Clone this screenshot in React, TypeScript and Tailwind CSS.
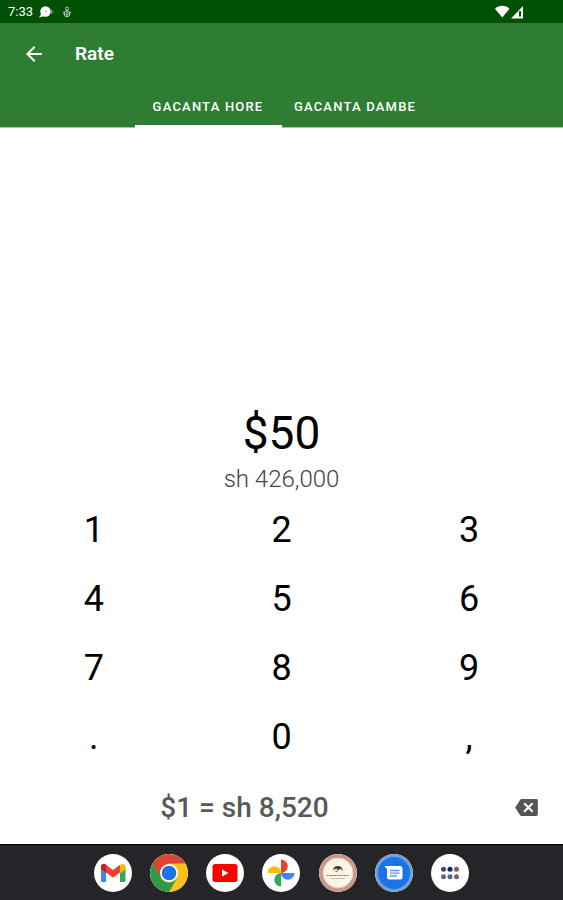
import { useState } from "react";
import type { ReactNode } from "react";

const TABS = ["GACANTA HORE", "GACANTA DAMBE"];
const KEYS = ["1", "2", "3", "4", "5", "6", "7", "8", "9", ".", "0", ","];

function StatusBar() {
  return (
    <div className="flex h-[23px] items-center bg-[#005005] pl-2 pr-10 text-white">
      <span className="text-[13px] leading-4">7:33</span>
      <svg className="ml-1.5 h-4 w-[15px]" viewBox="0 0 15 16" aria-hidden="true">
        <circle cx="6.500" cy="7.500" r="5.200" fill="#fff" />
        <path d="M3 8.500 0 13.500l5.500-1.500z" fill="#fff" />
        <circle cx="6.800" cy="7.500" r="1" fill="#8eb38f" />
        <path d="M12.500 5.500v4.500M14 6.500v2.500" stroke="#6b976c" strokeWidth="1" />
      </svg>
      <svg className="ml-2 h-4 w-2.5" viewBox="0 0 10 16" fill="none" stroke="#b5ceb5" aria-hidden="true">
        <circle cx="5" cy="4.500" r="1.500" />
        <circle cx="5" cy="9.800" r="3" />
        <path d="M1 8l4 3 4-3M5 6v6" />
      </svg>
      <svg className="ml-auto h-4 w-[28px]" viewBox="0 0 28 16" aria-hidden="true">
        <path d="M0 4.700C4 .9 10.500.9 14.500 4.700L7.300 13.400z" fill="#fff" />
        <path d="M28 2v12.500H16z" fill="#fff" />
        <path d="M25 7v5.500" stroke="#005005" strokeWidth="2" />
      </svg>
    </div>
  );
}

function GmailIcon() {
  return (
    <svg viewBox="0 0 38 38" className="size-full">
      <path d="M7 13v13.500q0 1.500 1.500 1.500H12V16z" fill="#4285f4" />
      <path d="M26 16v12h4q1.500 0 1.500-1.500V13z" fill="#34a853" />
      <path d="M26 12.500v7l5.500-4.300V13c0-3-3-4-5.500-2z" fill="#fbbc04" />
      <path d="M7 15.200V13c0-3 3-4 5-2.300l7 5.300 7-5.300v7.800l-7 5.200-7-5.200z" fill="#ea4335" />
      <path d="M7 12.500v2.700l5 3.500v-8C9.500 9 7 10.300 7 12.500z" fill="#c5221f" />
    </svg>
  );
}

function ChromeIcon() {
  return (
    <svg viewBox="0 0 38 38" className="size-full">
      <circle cx="19" cy="19" r="19" fill="#fbc116" />
      <path d="M2.550 9.500A19 19 0 0 1 35.450 9.500H19L10.800 23.800z" fill="#db4437" />
      <path d="M2.550 9.500A19 19 0 0 0 19 38l8.200-14.250A9.500 9.500 0 0 1 10.800 23.750z" fill="#2b9b49" />
      <circle cx="19" cy="19" r="9" fill="#fff" />
      <circle cx="19" cy="19" r="7.300" fill="#1a73e8" />
    </svg>
  );
}

function YoutubeIcon() {
  return (
    <svg viewBox="0 0 38 38" className="size-full">
      <rect x="6.500" y="10" width="25" height="18" rx="2.500" fill="#f00" />
      <path d="M16 15.500v7l6.500-3.500z" fill="#fff" />
    </svg>
  );
}

function PhotosIcon() {
  return (
    <svg viewBox="0 0 38 38" className="size-full">
      <path d="M19 5.500a6.700 6.700 0 0 1 0 13.500z" fill="#ea4335" />
      <path d="M32.500 19a6.700 6.700 0 0 1-13.500 0z" fill="#4285f4" />
      <path d="M19 32.500a6.700 6.700 0 0 1 0-13.500z" fill="#34a853" />
      <path d="M5.500 19a6.700 6.700 0 0 1 13.500 0z" fill="#fbbc04" />
    </svg>
  );
}

function BadgeIcon() {
  return (
    <svg viewBox="0 0 38 38" className="size-full">
      <circle cx="19" cy="19" r="19" fill="#c9988b" />
      <circle cx="19" cy="19" r="15" fill="#fbf5e6" stroke="#e8cfc2" />
      <path d="M14 16q1-4.500 5.500-4 4 .5 4.500 5l-2.500-2.500-2 2-2-2z" fill="#4a3832" />
      <path d="m15.500 17 2-1.500 1.500 2-1 1z" fill="#c98d80" />
      <path d="M7.500 21.500h23" stroke="#8d8077" strokeWidth="1.200" strokeDasharray="2 .5" />
      <path d="M12 24.500h14" stroke="#e0b5a8" />
    </svg>
  );
}

function MessagesIcon() {
  return (
    <svg viewBox="0 0 38 38" className="size-full">
      <circle cx="19" cy="19" r="19" fill="#6f9fd8" />
      <circle cx="19" cy="19" r="16" fill="#1a73e8" />
      <path d="M9.500 12h15.500q2.500 0 2.500 2.500V23q0 2.500-2.500 2.500H14.500Q12 25.500 12 23v-8z" fill="#fff" />
      <path d="M15 16.500h9.500M15 19.200h9.500M15 22h7" stroke="#5d95e8" strokeWidth="1.300" />
    </svg>
  );
}

function AppsIcon() {
  return (
    <svg viewBox="0 0 38 38" className="size-full">
      <circle cx="12.500" cy="15.300" r="2.500" fill="#3b4a8c" />
      <circle cx="19" cy="15.300" r="2.500" fill="#1a1a7e" />
      <circle cx="25.500" cy="15.300" r="2.500" fill="#9a5270" />
      <circle cx="12.500" cy="22.700" r="2.500" fill="#686878" />
      <circle cx="19" cy="22.700" r="2.500" fill="#5d5d82" />
      <circle cx="25.500" cy="22.700" r="2.500" fill="#686878" />
    </svg>
  );
}

const DOCK: { label: string; icon: ReactNode }[] = [
  { label: "Gmail", icon: <GmailIcon /> },
  { label: "Chrome", icon: <ChromeIcon /> },
  { label: "YouTube", icon: <YoutubeIcon /> },
  { label: "Photos", icon: <PhotosIcon /> },
  { label: "Rate", icon: <BadgeIcon /> },
  { label: "Messages", icon: <MessagesIcon /> },
  { label: "All apps", icon: <AppsIcon /> },
];

export default function App() {
  const [tab, setTab] = useState(0);
  const [amount, setAmount] = useState("50");
  const shillings = (Number(amount.replace(/,/g, "")) || 0) * 8520;

  return (
    <div className="flex min-h-screen flex-col bg-white font-[Roboto,sans-serif] text-black">
      <StatusBar />
      <header className="bg-[#2e7d32] text-white">
        <div className="flex h-[62px] items-center pl-[22px]">
          <button type="button" aria-label="Back" className="flex size-6 items-center justify-center">
            <svg viewBox="0 0 24 24" className="size-6" fill="#fff" aria-hidden="true">
              <path d="M20 11H7.830l5.590-5.590L12 4l-8 8 8 8 1.410-1.410L7.830 13H20z" />
            </svg>
          </button>
          <h1 className="ml-[29px] text-[19px] font-semibold leading-6">Rate</h1>
        </div>
        <div role="tablist" className="flex justify-center border-b border-[#a4c3a5]">
          {TABS.map((name, i) => (
            <button
              key={name}
              type="button"
              role="tab"
              aria-selected={tab === i}
              onClick={() => setTab(i)}
              className={`-mb-px h-[43px] w-[147px] border-b-[3px] pt-1 text-[13px] font-medium tracking-[1.2px] whitespace-nowrap ${
                tab === i ? "border-white" : "border-transparent"
              }`}
            >
              {name}
            </button>
          ))}
        </div>
      </header>

      <main className="flex flex-1 flex-col">
        <div className="flex flex-1 flex-col items-center justify-end">
          <output className="text-[46px] leading-[56px]">${amount}</output>
          <p className="mt-0.5 text-2xl font-light leading-8 text-[#444]">sh {shillings.toLocaleString("en-US")}</p>
        </div>
        <div className="grid grid-cols-3">
          {KEYS.map((key) => (
            <button
              key={key}
              type="button"
              onClick={() => setAmount((a) => a + key)}
              className="h-[69px] text-4xl font-[450]"
            >
              {key}
            </button>
          ))}
        </div>
        <div className="flex h-[73px] items-center">
          <p className="flex-1 text-center text-[28px] font-medium leading-9 text-[#595959]">$1 = sh 8,520</p>
          <button
            type="button"
            aria-label="Delete"
            onClick={() => setAmount((a) => a.slice(0, -1))}
            className="flex h-12 w-[74px] items-center justify-center"
          >
            <svg viewBox="0 0 24 18" className="h-[17px] w-[23px]" aria-hidden="true">
              <path d="M22.500 0H7Q6 0 5.300.9L0 9l5.300 8.100Q6 18 7 18h15.500q1.500 0 1.500-1.500v-15q0-1.500-1.500-1.500z" fill="#555" />
              <path d="m9.500 4.500 9 9m0-9-9 9" stroke="#fff" strokeWidth="2.200" />
            </svg>
          </button>
        </div>
      </main>

      <nav aria-label="Dock" className="flex h-14 items-center justify-center border-t border-black bg-[#252529]">
        {DOCK.map((item) => (
          <div key={item.label} className="flex w-1/10 justify-center">
            <button type="button" aria-label={item.label} className="size-[38px] overflow-hidden rounded-full bg-white">
              {item.icon}
            </button>
          </div>
        ))}
      </nav>
    </div>
  );
}
